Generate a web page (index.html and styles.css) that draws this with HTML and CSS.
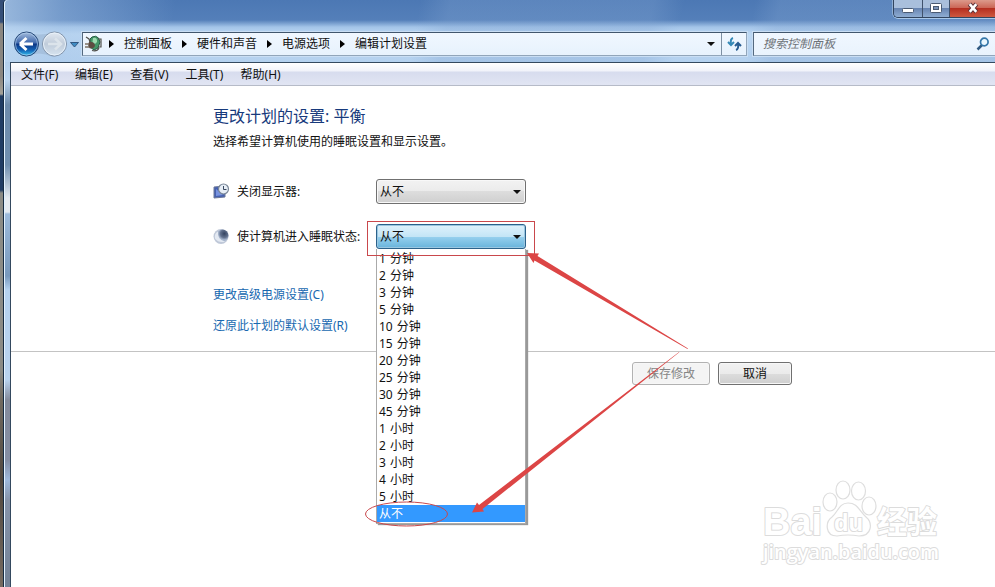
FILE: index.html
```html
<!DOCTYPE html>
<html lang="zh-CN">
<head>
<meta charset="utf-8">
<title>编辑计划设置</title>
<link rel="stylesheet" href="styles.css">
</head>
<body>
<div class="desktop">
<div class="window">
  <header class="glass">
    <div class="titlebar">
      <div class="captions">
        <span class="cap"><svg width="14" height="15"><rect x="1.500" y="8.500" width="11" height="4" rx="1" fill="#fff" stroke="#4a5a72"/></svg></span>
        <span class="cap cap-max"><svg width="14" height="15"><rect x="1.500" y="3.500" width="11" height="9" rx="1" fill="#fff" stroke="#4a5a72"/><rect x="4.500" y="6.500" width="5" height="3" fill="#7b93b8" stroke="#4a5a72"/></svg></span>
        <span class="cap cap-close"><svg width="14" height="15"><path d="M3.500 4L10.500 12M10.500 4L3.500 12" stroke="#5b3037" stroke-width="4.500"/><path d="M3.700 4.200L10.300 11.800M10.300 4.200L3.700 11.800" stroke="#fff" stroke-width="2.600"/></svg></span>
      </div>
    </div>
    <div class="navrow">
      <svg class="navbuttons" width="69" height="30" viewBox="0 0 69 30">
        <defs>
          <linearGradient id="back" x1="0" y1="0" x2="0" y2="1"><stop offset="0" stop-color="#a5bddd"/><stop offset=".46" stop-color="#3f68ac"/><stop offset=".5" stop-color="#0b3584"/><stop offset=".75" stop-color="#1261b4"/><stop offset="1" stop-color="#36c5f2"/></linearGradient>
          <linearGradient id="fwd" x1="0" y1="0" x2="0" y2="1"><stop offset="0" stop-color="#e3eaf2"/><stop offset=".5" stop-color="#c0ccda"/><stop offset="1" stop-color="#d7e4f0"/></linearGradient>
        </defs>
        <path d="M14 3Q28 8 42 3Q54 4 54 15Q53 27 42 28Q28 21 14 28Z" fill="#9db7d4" opacity=".65"/>
        <circle cx="15.500" cy="15" r="12" fill="url(#back)" stroke="#254777"/>
        <circle cx="15.500" cy="15" r="11" fill="none" stroke="#b4d3ef" opacity=".65"/>
        <path d="M9 15L15.500 9M9 15L15.500 21M9 15H22" fill="none" stroke="#fff" stroke-width="3"/>
        <circle cx="43.500" cy="15" r="12" fill="url(#fwd)" stroke="#8294ab"/>
        <circle cx="43.500" cy="15" r="11" fill="none" stroke="#e9f2fa"/>
        <path d="M37 15H49M44 9.500L50 15L44 20.500" fill="none" stroke="#dce4eb" stroke-width="2.500"/>
        <path d="M59.500 13.500H67.500L63.500 18Z" fill="#3f8cc4" stroke="#315781"/>
      </svg>
      <div class="address">
        <svg class="plug" width="18" height="20" viewBox="0 0 18 20"><path d="M6 5L8 3Q12 1 14.500 4L16 8L14 14L10 16L6 13Z" fill="#449668" stroke="#265d42"/><path d="M9 4Q13.500 3 13 8L11 10L8.500 8Z" fill="#9ddab0"/><path d="M2 3L5 5L6 8M14 5H17V13H14M8 16.500Q13 18 15 14" fill="none" stroke="#50504b" stroke-width="1.200"/><path d="M5 8H8Q11 9 11 12Q10 14.500 6 14.500Q3 12 5 8Z" fill="#5e4c42"/><path d="M1 10H5M1 13H5" stroke="#7d7265" stroke-width="1.500"/></svg>
        <i class="sep"></i><span>控制面板</span><i class="sep"></i><span>硬件和声音</span><i class="sep"></i><span>电源选项</span><i class="sep"></i><span>编辑计划设置</span>
        <i class="down"></i>
        <span class="refresh"><svg width="15" height="14" viewBox="0 0 15 14"><path d="M6 1Q3 2 4 7M1 5L4 8L7 5" fill="none" stroke="#3488b6" stroke-width="2"/><path d="M9 13Q12 12 11 7M8 9L11 6L14 9" fill="none" stroke="#275c91" stroke-width="2"/></svg></span>
      </div>
      <div class="search"><span>搜索控制面板</span><svg width="14" height="14" viewBox="0 0 14 14"><path d="M1.500 12.500L6 8" stroke="#315a82" stroke-width="2.500"/><circle cx="8.300" cy="5" r="3.800" fill="#e9f7ff" stroke="#3577a9" stroke-width="1.700"/></svg></div>
    </div>
  </header>
  <main class="client">
    <nav class="menu"><span>文件(F)</span><span>编辑(E)</span><span>查看(V)</span><span>工具(T)</span><span>帮助(H)</span></nav>
    <section class="settings">
      <h1>更改计划的设置: 平衡</h1>
      <p class="intro">选择希望计算机使用的睡眠设置和显示设置。</p>
      <div class="row">
        <svg width="18" height="18" viewBox="0 0 18 18"><path d="M1 4L12 3V14L1 15Z" fill="#4560b0" stroke="#6c7898"/><path d="M3 6V13L10 12Z" fill="#7893df"/><circle cx="10.500" cy="6" r="5" fill="#e7eef6" stroke="#7a8798" stroke-width="1.200"/><path d="M10.500 3V6.500H13.500" fill="none" stroke="#38475f"/></svg>
        <label>关闭显示器:</label>
        <div class="select">从不<i class="down"></i></div>
      </div>
      <div class="row row-sleep">
        <svg width="18" height="18" viewBox="0 0 18 18"><defs><radialGradient id="moon" cx=".65" cy=".35"><stop offset="0" stop-color="#344360"/><stop offset=".65" stop-color="#63728e"/><stop offset="1" stop-color="#a5b4cc"/></radialGradient></defs><circle cx="8" cy="8.500" r="7.500" fill="#bfc8d8"/><circle cx="9.500" cy="7.500" r="6" fill="url(#moon)"/><path d="M5 3.500Q4 11.500 12 13.500Q6 15.500 2 10.500Q1 5.500 5 3.500Z" fill="#e3e9f2"/></svg>
        <label>使计算机进入睡眠状态:</label>
        <div class="select open">从不<i class="down"></i>
          <div class="options"><div>1 分钟</div><div>2 分钟</div><div>3 分钟</div><div>5 分钟</div><div>10 分钟</div><div>15 分钟</div><div>20 分钟</div><div>25 分钟</div><div>30 分钟</div><div>45 分钟</div><div>1 小时</div><div>2 小时</div><div>3 小时</div><div>4 小时</div><div>5 小时</div><div class="chosen">从不</div></div>
        </div>
      </div>
      <a class="link">更改高级电源设置(C)</a>
      <a class="link">还原此计划的默认设置(R)</a>
    </section>
    <footer class="actions"><span class="button disabled">保存修改</span><span class="button">取消</span></footer>
  </main>
</div>
</div>
<svg class="overlay" width="995" height="587" viewBox="0 0 995 587">
  <g fill="none" stroke="#c9484c"><rect x="367.500" y="221.500" width="167" height="34"/><ellipse cx="406.500" cy="514" rx="41" ry="12"/></g>
  <g fill="#dc4545"><path d="M527 253L539 253.500L537.500 256L688 348.500L687.500 349L534.500 260.500L533.500 263Z"/><path d="M472 512.500L477 502.500L479 505L679 352L679.300 352.300L482.500 509L484 511.500Z"/></g>
  <g class="watermark">
    <g fill="#fff" stroke="#dedede" stroke-width="1.200"><ellipse cx="830" cy="502" rx="7" ry="9"/><ellipse cx="843" cy="490" rx="7" ry="9"/><ellipse cx="858.500" cy="491" rx="7" ry="9"/><ellipse cx="869" cy="506" rx="7" ry="9"/><path d="M848 503C839 503 838 512 832 517C825 522 825 536 837 536Q848 534 859 536C872 536 873 523 866 517C859 511 858 503 848 503Z"/></g>
    <text class="wm-main" x="763" y="535" textLength="59" lengthAdjust="spacingAndGlyphs">Bai</text>
    <text class="wm-du" x="834" y="531" textLength="29" lengthAdjust="spacingAndGlyphs">du</text>
    <text class="wm-cjk" x="877" y="533" textLength="60" lengthAdjust="spacingAndGlyphs">经验</text>
    <text class="wm-url" x="763" y="559" textLength="176" lengthAdjust="spacingAndGlyphs">jingyan.baidu.com</text>
  </g>
</svg>
</body>
</html>
```
FILE: styles.css
```css
* { box-sizing: border-box; }
body { margin: 0; width: 995px; height: 587px; overflow: hidden; position: relative; font: 12px/17px "Noto Sans", "Noto Sans CJK SC", sans-serif; color: #111; }
svg { display: block; flex: none; }
.desktop { height: 587px; padding-left: 3px; background: linear-gradient(#354f78 0 22px, #8a8680 24px 76px, #a3a198 94px, #203c63 96px 190px, #8b8b85 193px 370px, #70695f 400px, #51483f 480px, #756a60 587px); }
.window { height: 587px; border-left: 1px solid #152b42; border-top-left-radius: 4px; display: flex; flex-direction: column; background: linear-gradient(#9cbbdc 0, #b9d4ef 80px, #6d8bab 105px, #7190b0 165px, #e4eaf0 198px, #e4eaf0 212px, #9dbbdc 214px, #7899bd 276px, #b5d2ef 290px, #b8d2ed 380px, #848b9c 400px, #858ea3 460px, #9eb9dc 480px, #8794aa 500px, #748398 580px); box-shadow: inset 1px 0 #e3f2ff; }
.glass { flex: none; height: 62px; background: linear-gradient(100deg, rgba(190,215,240,.65), rgba(170,200,233,.4) 60px, transparent 170px, transparent 410px, rgba(130,165,210,.3) 440px, rgba(130,165,210,.3) 640px, transparent 670px, transparent 740px, rgba(130,165,210,.3) 765px), linear-gradient(#4c78b4 0, #547fb9 20px, #a3c4e8 27px, #bdd8f3 34px, #b4d1ef 62px); box-shadow: inset 1px 0 #e3f2ff; border-top-left-radius: 4px; }
.titlebar { height: 28px; display: flex; justify-content: flex-end; }
.captions { display: flex; height: 18px; width: 102px; border: solid #32455f; border-width: 0 0 1px 1px; border-bottom-left-radius: 5px; overflow: hidden; box-shadow: 0 1px #a8c7e8, -1px 0 #91b0d5; }
.cap { width: 29px; display: flex; justify-content: center; background: linear-gradient(#a9bfdc 0 45%, #6885b2 50%, #8fadd2); border-right: 1px solid #40526c; }
.cap-max { width: 27px; }
.cap-close { width: 45px; border: 0; background: linear-gradient(#dc9a8b 0, #cc6757 45%, #b52f20 50%, #ce5840); }
.navrow { display: flex; height: 34px; padding-left: 7px; }
.navbuttons { margin-top: 1px; }
.address { display: flex; align-items: center; width: 665px; height: 24px; margin: 4px 6px 0 2px; background: linear-gradient(#f0f7ff, #e7f2fd); border: 1px solid #91a5ba; border-top-color: #41566d; border-left-color: #54697f; line-height: 22px; box-shadow: 0 0 0 1px #c9def4; }
.plug { margin-left: 1px; }
.sep { width: 0; height: 0; border: solid transparent; border-width: 4px 0 4px 5px; border-left-color: #000; margin: 0 10px; flex: none; }
.plug + .sep { margin-left: 7px; }
.address span { white-space: nowrap; }
.down { width: 0; height: 0; border: solid transparent; border-width: 4px 4px 0; border-top-color: #111; margin-left: auto; flex: none; }
.address .down { margin-right: 6px; }
.refresh { width: 25px; height: 22px; border-left: 1px solid #7c8fa3; display: flex; align-items: center; justify-content: center; }
.search { flex: 1; display: flex; justify-content: space-between; align-items: center; height: 24px; margin-top: 4px; padding: 0 5px 0 9px; border: 1px solid #91a5ba; border-top-color: #41566d; border-left-color: #54697f; border-right: 0; background: linear-gradient(#f0f7ff, #e9f3fd); color: #6e7378; font-style: italic; box-shadow: 0 0 0 1px #c9def4; }
.search span { margin-top: -1px; }
.client { flex: 1; min-height: 0; margin-left: 6px; border: solid #34495f; border-width: 1px 0 0 1px; background: #fff; }
.menu { display: flex; gap: 16px; height: 23px; padding-left: 10px; line-height: 23px; border-bottom: 1px solid #b6bbc8; background: linear-gradient(#fff, #f1f3fa 8px, #d7dcee 9px, #e1e5f3); }
.menu span { width: 39.200px; white-space: nowrap; }
.menu span:first-child { width: 38px; }
.settings { height: 265px; padding: 18px 0 0 202px; }
h1 { margin: 0; font: 16px/24px "Noto Sans", "Noto Sans CJK SC", sans-serif; color: #173a7c; }
.intro { margin: 5px 0 29px; line-height: 17px; }
.row { display: flex; height: 25px; align-items: center; }
.row label { width: 139px; margin-left: 6px; white-space: nowrap; }
.row-sleep { margin: 20px 0 37px; }
.select { position: relative; width: 150px; height: 25px; padding: 0 4px 0 3px; display: flex; align-items: center; border: 1px solid #707070; border-radius: 3px; background: linear-gradient(#f2f2f2, #ebebeb 50%, #ddd 50%, #cfcfcf); box-shadow: inset 0 0 0 1px #f8f8f8; }
.select.open { border-color: #2c628b; background: linear-gradient(#dff2fc, #c4e5f6 50%, #98d1ef 50%, #68b3db); box-shadow: inset 0 0 0 1px #9ac7e1; }
.options { position: absolute; top: 24px; left: -1px; width: 150px; height: 275px; padding-top: 1px; border: 1px solid #aaa; border-top: 0; background: #fff; box-shadow: 2px 1px 1px #999; }
.options div { height: 17px; line-height: 17px; padding-left: 2px; word-spacing: 1px; }
.options .chosen { color: #fff; background: #3399ff; }
.link { display: block; height: 17px; margin-bottom: 14px; color: #1768b0; }
.actions { display: flex; gap: 8px; border-top: 1px solid #c3c3c3; padding: 10px 0 0 621px; }
.button { width: 74px; height: 23px; line-height: 21px; text-align: center; border: 1px solid #707070; border-radius: 3px; background: linear-gradient(#f2f2f2, #ebebeb 50%, #ddd 50%, #cfcfcf); box-shadow: inset 0 0 0 1px #f7f7f7; }
.button.disabled { width: 78px; color: #858585; border-color: #b2b2b2; background: #f4f4f4; }
.overlay { position: absolute; inset: 0; }
.watermark text { fill: #fff; stroke: #dcdcdc; stroke-width: 2px; stroke-linejoin: round; paint-order: stroke; }
.watermark .wm-main { font: bold 38px "Liberation Sans", sans-serif; }
.watermark .wm-du { font: bold 24px "Liberation Sans", sans-serif; }
.watermark .wm-cjk { font: bold 31px "Noto Sans CJK SC", sans-serif; }
.watermark .wm-url { font: 600 20px "Open Sans", sans-serif; }
```
